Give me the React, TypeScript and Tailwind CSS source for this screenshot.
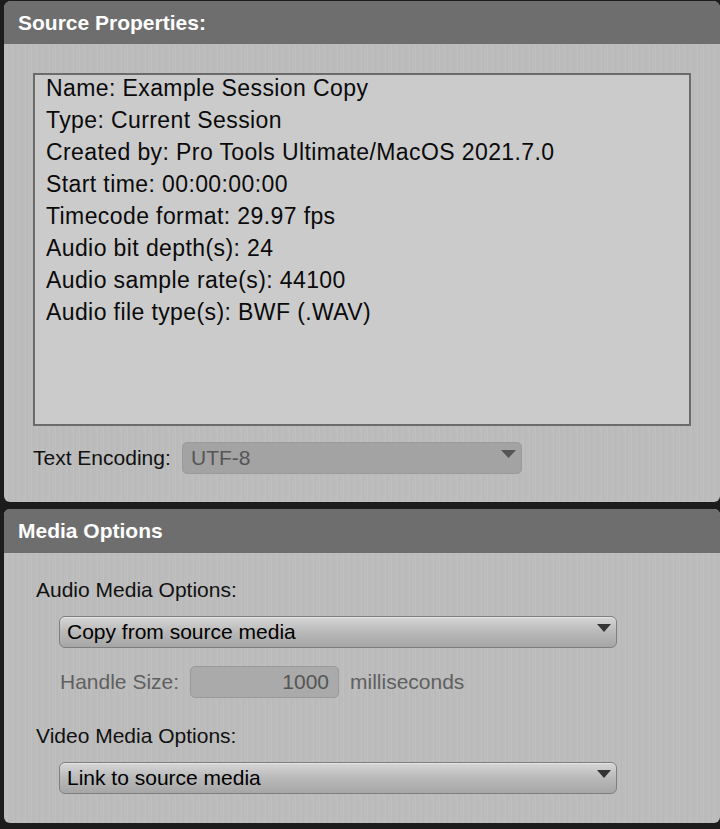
import React from "react";

const font = "font-[family-name:'Liberation_Sans',Arial,Helvetica,sans-serif]";
const bodyBg =
  "bg-[#bcbcbc] bg-[repeating-linear-gradient(90deg,#bcbcbc_0px,#bcbcbc_3px,#bfbfbf_3px,#bfbfbf_4px,#bababa_4px,#bababa_6px)]";

function Arrow({ color }: { color: string }) {
  return (
    <svg width="14" height="8" viewBox="0 0 14 8" className="absolute right-[5px] top-[7px]">
      <polygon points="0,0 14,0 7,8" fill={color} />
    </svg>
  );
}

function Select({ label, className }: { label: string; className?: string }) {
  return (
    <div
      className={
        "relative h-[32px] w-[558px] rounded-[6px] border border-[#7e7e7e] bg-[linear-gradient(to_bottom,#d6d6d6,#b9b9b9_50%,#a6a6a6)] shadow-[inset_0_1px_0_#e4e4e4] flex items-center pl-[7px] text-[21px] text-black " +
        (className ?? "")
      }
    >
      {label}
      <Arrow color="#333333" />
    </div>
  );
}

export default function App() {
  const lines = [
    "Name: Example Session Copy",
    "Type: Current Session",
    "Created by: Pro Tools Ultimate/MacOS 2021.7.0",
    "Start time: 00:00:00:00",
    "Timecode format: 29.97 fps",
    "Audio bit depth(s): 24",
    "Audio sample rate(s): 44100",
    "Audio file type(s): BWF (.WAV)",
  ];
  return (
    <div className={"w-[720px] h-[829px] bg-[#1c1c1c] pl-[4px] pt-[1px] overflow-hidden " + font}>
      {/* Source Properties */}
      <div className={"h-[501px] rounded-t-[7px] rounded-b-[6px] overflow-hidden flex flex-col " + bodyBg}>
        <div className="h-[43px] bg-[#6e6e6e] flex items-center pl-[14px] text-white font-bold text-[21px]">
          Source Properties:
        </div>
        <div className="pl-[29px] pt-[29px]">
          <div className="w-[658px] h-[353px] border-2 border-[#6b6b6b] bg-[#cbcbcb] pl-[11px]">
            <div className="-mt-[3px] text-[23px] leading-[32px] tracking-[0.4px] text-[#0a0a0a]">
              {lines.map((l) => (
                <div key={l}>{l}</div>
              ))}
            </div>
          </div>
          <div className="mt-[15px] flex items-center h-[33px]">
            <span className="text-[21px] text-[#111] w-[149px]">Text Encoding:</span>
            <div className="relative h-[32px] w-[340px] rounded-[5px] border border-[#9a9a9a] bg-[#a3a3a3] flex items-center pl-[8px] text-[21px] text-[#555]">
              UTF-8
              <svg width="15" height="8" viewBox="0 0 15 8" className="absolute right-[5px] top-[7px]">
                <polygon points="0,0 15,0 7.5,8" fill="#555555" />
              </svg>
            </div>
          </div>
        </div>
      </div>

      {/* Media Options */}
      <div className={"mt-[7px] h-[314px] rounded-t-[6px] rounded-b-[6px] overflow-hidden flex flex-col " + bodyBg}>
        <div className="h-[44px] bg-[#6e6e6e] flex items-center pl-[14px] text-white font-bold text-[21px]">
          Media Options
        </div>
        <div className="pl-[32px] pt-[24px] flex flex-col">
          <div className="text-[21px] leading-[26px] text-[#111]">Audio Media Options:</div>
          <Select label="Copy from source media" className="ml-[23px] mt-[13px]" />
          <div className="ml-[24px] mt-[18px] flex items-center h-[32px] text-[21px] text-[#606060]">
            <span className="w-[130px]">Handle Size:</span>
            <div className="h-[32px] w-[149px] rounded-[5px] border border-[#999] bg-[#aaaaaa] flex items-center justify-end pr-[9px] text-[#555]">
              1000
            </div>
            <span className="ml-[11px]">milliseconds</span>
          </div>
          <div className="mt-[25px] text-[21px] leading-[26px] text-[#111]">Video Media Options:</div>
          <Select label="Link to source media" className="ml-[23px] mt-[13px]" />
        </div>
      </div>
    </div>
  );
}
